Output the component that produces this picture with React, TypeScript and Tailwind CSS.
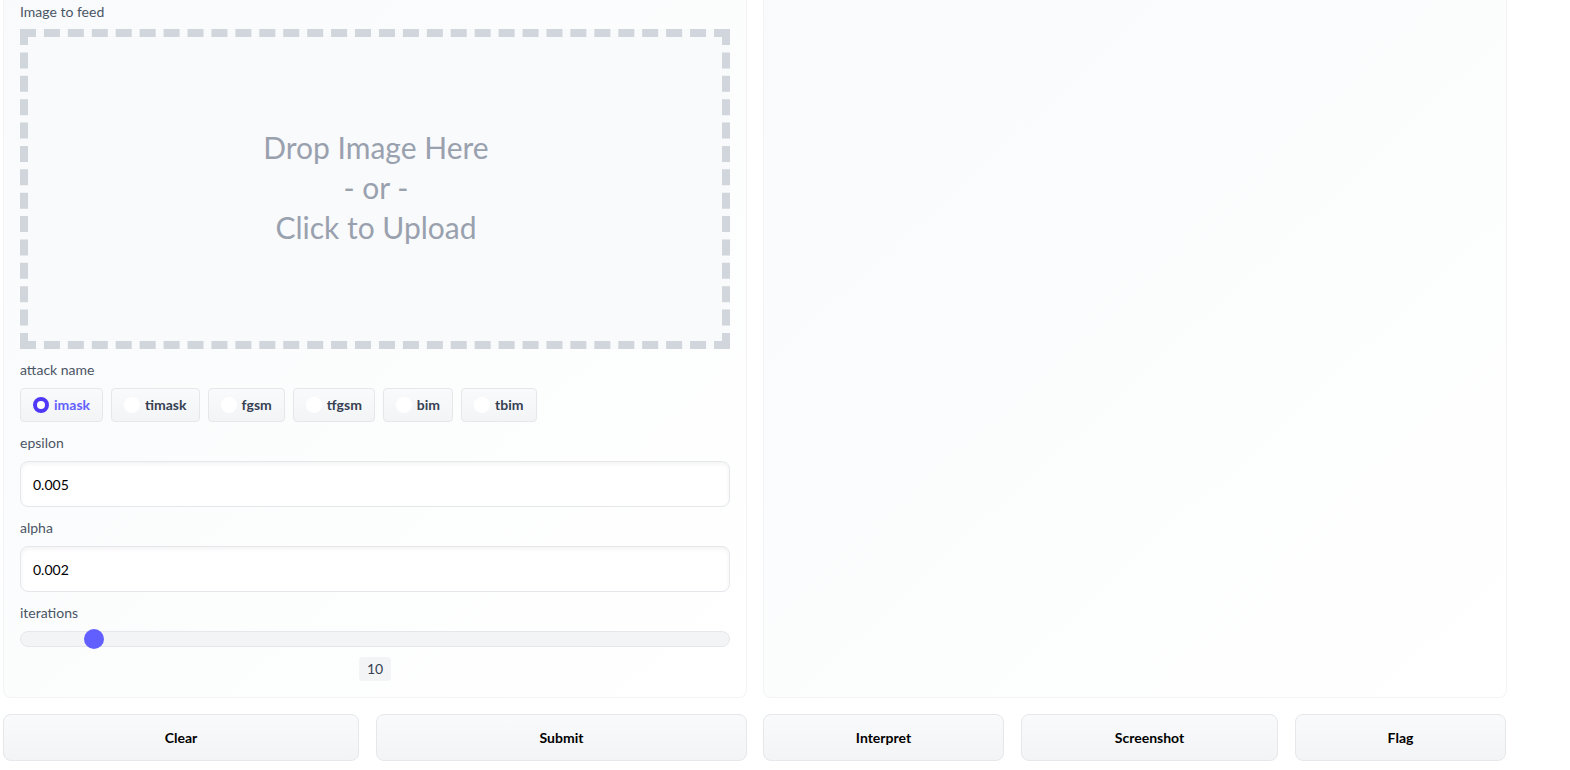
import React, { useState } from 'react'

const attacks = ['imask', 'timask', 'fgsm', 'tfgsm', 'bim', 'tbim']

function Label({ children }: { children: React.ReactNode }) {
  return <span className="block mb-2 text-sm leading-5 text-gray-600">{children}</span>
}

function NumberField({ label, value }: { label: string; value: string }) {
  return (
    <div>
      <Label>{label}</Label>
      <input
        defaultValue={value}
        className="block w-full h-[46px] px-3 rounded-lg border border-gray-200 bg-white text-sm text-black shadow-inner outline-none"
      />
    </div>
  )
}

export default function App() {
  const [attack, setAttack] = useState('imask')
  const iterations = 10
  const pct = ((iterations - 1) / 99) * 100

  return (
    <div
      className="w-[1570px] h-[770px] overflow-hidden bg-white pl-[3px]"
      style={{ fontFamily: 'Lato, "Open Sans", sans-serif' }}
    >
      <div className="w-[1504px] flex gap-4">
        {/* Input panel */}
        <div className="w-[744px] h-[698px] flex flex-col gap-[11px] px-4 pt-[2px] rounded-b-lg border border-t-0 border-gray-100 bg-linear-to-br from-gray-50 to-white">
          <div>
            <span className="block mb-[7px] text-sm leading-5 text-gray-600">Image to feed</span>
            <div className="h-[320px] border-8 border-dashed border-gray-300 bg-gray-50 flex flex-col items-center justify-center pl-[2px] pb-1">
              <div className="text-[30px] leading-10 text-gray-400 text-center">
                Drop Image Here
                <br />- or -
                <br />
                Click to Upload
              </div>
            </div>
          </div>

          <div>
            <Label>attack name</Label>
            <div className="flex gap-2">
              {attacks.map((a) => {
                const on = a === attack
                return (
                  <button
                    key={a}
                    onClick={() => setAttack(a)}
                    className="h-[34px] flex items-center gap-[5px] pl-3 pr-3 rounded border border-gray-200 bg-linear-to-b from-gray-50 to-gray-100 text-sm font-bold"
                  >
                    <span
                      className={`w-4 h-4 rounded-full bg-white ${on ? 'border-[4px] border-indigo-600' : ''}`}
                    />
                    <span className={on ? 'text-indigo-500' : 'text-gray-700'}>{a}</span>
                  </button>
                )
              })}
            </div>
          </div>

          <NumberField label="epsilon" value="0.005" />
          <NumberField label="alpha" value="0.002" />

          <div>
            <Label>iterations</Label>
            <div className="relative h-4 rounded-full border border-gray-200 bg-gray-100">
              <span
                className="absolute top-1/2 w-5 h-5 -mt-[10px] rounded-full bg-indigo-500"
                style={{ left: `calc(${pct}% - ${pct * 0.2}px)` }}
              />
            </div>
            <div className="flex justify-center mt-[10px]">
              <span className="px-2 h-6 leading-6 rounded bg-gray-100 text-sm text-gray-700">{iterations}</span>
            </div>
          </div>
        </div>

        {/* Output panel */}
        <div className="w-[744px] h-[698px] rounded-b-lg border border-t-0 border-gray-100 bg-linear-to-br from-gray-50 to-white" />
      </div>

      {/* Actions */}
      <div className="w-[1504px] flex gap-4 mt-4 text-sm font-bold text-black">
        <div className="w-[744px] flex gap-[17px]">
          <button className="w-[356px] h-[47px] rounded-lg border border-gray-200 bg-linear-to-b from-gray-50 to-gray-100">Clear</button>
          <button className="w-[371px] h-[47px] rounded-lg border border-gray-200 bg-linear-to-b from-gray-50 to-gray-100">Submit</button>
        </div>
        <div className="w-[744px] flex gap-[17px]">
          <button className="w-[241px] h-[47px] rounded-lg border border-gray-200 bg-linear-to-b from-gray-50 to-gray-100">Interpret</button>
          <button className="w-[257px] h-[47px] rounded-lg border border-gray-200 bg-linear-to-b from-gray-50 to-gray-100">Screenshot</button>
          <button className="w-[211px] h-[47px] rounded-lg border border-gray-200 bg-linear-to-b from-gray-50 to-gray-100">Flag</button>
        </div>
      </div>
    </div>
  )
}
